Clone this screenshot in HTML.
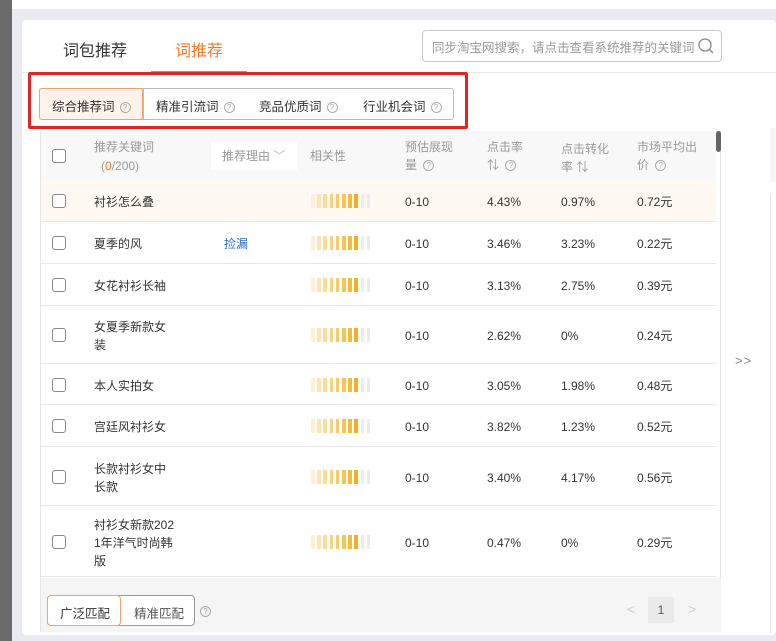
<!DOCTYPE html>
<html><head><meta charset="utf-8"><style>
*{box-sizing:border-box;margin:0;padding:0}
body{width:776px;height:641px;overflow:hidden;background:#e9ebef;font-family:"Liberation Sans","Noto Sans CJK SC",sans-serif;font-size:12px;color:#333;position:relative}
.abs{position:absolute}
.dark{left:0;top:0;width:12px;height:641px;background:#6b6b6b}
.top{left:12px;top:0;width:764px;height:9px;background:#fff}
.panel{left:22px;top:20px;width:754px;height:615px;background:#fff;border-radius:4px}
.tab{font-size:16px;top:37px}
.hl{left:151px;top:71px;width:96px;height:2px;background:#f07c2a}
.hr{left:22px;top:72px;width:754px;height:1px;background:#e8e8e8}
.search{left:422px;top:30px;width:300px;height:32px;border:1px solid #c8c8c8;border-radius:4px;color:#999;font-size:12.5px;padding:6px 9px}
.red{left:28px;top:72px;width:440px;height:57px;border:3px solid #e12525;border-radius:2px}
.seg{left:39px;top:88px;width:415px;height:32px;border:1px solid #bbb;border-radius:3px}
.s{top:96px;font-size:12.5px;color:#333}
.q{display:inline-block;width:11px;height:11px;border:1px solid #aaa;border-radius:50%;font-size:8px;line-height:9px;text-align:center;color:#aaa;vertical-align:1px;margin-left:5px}
.sel{left:39px;top:88px;width:104px;height:32px;border:1px solid #f0a36c;border-radius:3px;background:#fdf3ea}
.tbl{left:40px;top:131px;width:681px;height:501px;border:1px solid #e6e6e6;border-top:none}
.hdr{left:41px;top:131px;width:675px;height:49px;background:#f8f8f8}
.hdr div{position:absolute;color:#999;font-size:12px;line-height:18px}
.cb{width:14px;height:14px;border:1px solid #888;border-radius:3px;background:#fff}
.row{left:41px;width:675px;border-bottom:1px solid #e8e8e8}
.row>div{position:absolute;font-size:12px;line-height:18px;color:#333}
.bars{display:flex;gap:2.6px}
.bars i{width:3.6px;height:14px;display:block}
.foot{left:41px;top:578px;width:680px;height:54px;background:#f5f5f5}
</style></head><body>
<div class="abs dark"></div>
<div class="abs top"></div>
<div class="abs panel"></div>
<div class="abs tab" style="left:63px;color:#333">词包推荐</div>
<div class="abs tab" style="left:175px;color:#f07c2a">词推荐</div>
<div class="abs hr"></div>
<div class="abs hl"></div>
<div class="abs search">同步淘宝网搜索，请点击查看系统推荐的关键词
<svg class="abs" style="left:274px;top:6px" width="18" height="18" viewBox="0 0 18 18"><circle cx="8" cy="8" r="6" fill="none" stroke="#888" stroke-width="1.3"/><path d="M12.5 12.5L16 16" stroke="#888" stroke-width="1.4"/></svg></div>
<div class="abs seg"></div>
<div class="abs sel"></div>
<div class="abs s" style="left:52px">综合推荐词<span class="q">?</span></div>
<div class="abs s" style="left:156px">精准引流词<span class="q">?</span></div>
<div class="abs s" style="left:259px">竞品优质词<span class="q">?</span></div>
<div class="abs s" style="left:363px">行业机会词<span class="q">?</span></div>
<div class="abs" style="left:143px;top:89px;width:1px;height:30px;background:#bbb"></div>
<div class="abs red"></div>

<div class="abs tbl"></div>
<div class="abs hdr">
<div class="cb" style="left:11px;top:18px;position:absolute;border-color:#888"></div>
<div style="left:53px;top:7px">推荐关键词</div>
<div style="left:60px;top:26px">(<span style="color:#f07c2a">0</span>/200)</div>
<div style="left:170px;top:11px;width:86px;height:28px;background:#fff;padding:5px 11px">推荐理由 <span style="color:#bbb">﹀</span></div>
<div style="left:269px;top:16px">相关性</div>
<div style="left:364px;top:7px">预估展现<br>量 <span class="q" style="margin-left:3px">?</span></div>
<div style="left:446px;top:7px">点击率<br>⇅ <span class="q" style="margin-left:3px">?</span></div>
<div style="left:520px;top:9px">点击转化<br>率 ⇅</div>
<div style="left:596px;top:7px">市场平均出<br>价 <span class="q" style="margin-left:3px">?</span></div>
</div>
<div class="abs" style="left:716px;top:131px;width:5px;height:21px;background:#666;border-radius:3px"></div>

<div id="rows"></div>
<div class="abs foot"></div>
<div class="abs" style="left:47px;top:595px;width:148px;height:31px;border:1px solid #999;border-radius:4px;background:#fff"></div>
<div class="abs" style="left:47px;top:595px;width:74px;height:31px;border:1px solid #f0a36c;border-radius:4px;background:#fff"></div>
<div class="abs" style="left:60px;top:603px;font-size:12.5px">广泛匹配</div>
<div class="abs" style="left:134px;top:603px;font-size:12.5px;color:#555">精准匹配</div>
<div class="abs" style="left:200px;top:604px"><span class="q" style="margin:0">?</span></div>
<div class="abs" style="left:627px;top:601px;color:#ccc;font-size:14px">&lt;</div>
<div class="abs" style="left:648px;top:597px;width:26px;height:26px;background:#eaeaea;text-align:center;line-height:26px;color:#555">1</div>
<div class="abs" style="left:688px;top:601px;color:#ccc;font-size:14px">&gt;</div>
<div class="abs" style="left:735px;top:353px;color:#888;font-size:13px;letter-spacing:1px">&gt;&gt;</div>
<div class="abs" style="left:770px;top:128px;width:6px;height:54px;background:#f5f5f5"></div>
<div class="abs" style="left:770px;top:194px;width:1px;height:440px;background:#e6e6e6"></div>

<script>
var d=[
[180,42,"衬衫怎么叠","","4.43%","0.97%","0.72元",1],
[222,42,"夏季的风","捡漏","3.46%","3.23%","0.22元"],
[264,42,"女花衬衫长袖","","3.13%","2.75%","0.39元"],
[306,58,"女夏季新款女<br>装","","2.62%","0%","0.24元"],
[364,41,"本人实拍女","","3.05%","1.98%","0.48元"],
[405,42,"宫廷风衬衫女","","3.82%","1.23%","0.52元"],
[447,59,"长款衬衫女中<br>长款","","3.40%","4.17%","0.56元"],
[506,71,"衬衫女新款202<br>1年洋气时尚韩<br>版","","0.47%","0%","0.29元"]];
var cols=["#fcefd2","#fbe5b5","#fadb98","#f9d27f","#f8cb6a","#f7c455","#f5bb3f","#f3ae22","#ececec","#ececec"];
var h="";
d.forEach(function(r){
var lines=r[2].split("<br>").length;var c=r[1]/2;
var bars=cols.map(function(x){return '<i style="background:'+x+'"></i>'}).join("");
h+='<div class="abs row" style="top:'+r[0]+'px;height:'+r[1]+'px;'+(r[7]?'background:#fdf8f2':'')+'">'+
'<div class="cb" style="left:11px;top:'+(c-7)+'px;border-color:#888"></div>'+
'<div style="left:53px;top:'+(c-lines*9+1)+'px">'+r[2]+'</div>'+
'<div style="left:183px;top:'+(c-8)+'px;color:#2a6bd1">'+r[3]+'</div>'+
'<div class="bars" style="left:270px;top:'+(c-7)+'px">'+bars+'</div>'+
'<div style="left:364px;top:'+(c-8)+'px">0-10</div>'+
'<div style="left:446px;top:'+(c-8)+'px">'+r[4]+'</div>'+
'<div style="left:520px;top:'+(c-8)+'px">'+r[5]+'</div>'+
'<div style="left:596px;top:'+(c-8)+'px">'+r[6]+'</div></div>';});
document.getElementById("rows").innerHTML=h;
</script>
</body></html>
